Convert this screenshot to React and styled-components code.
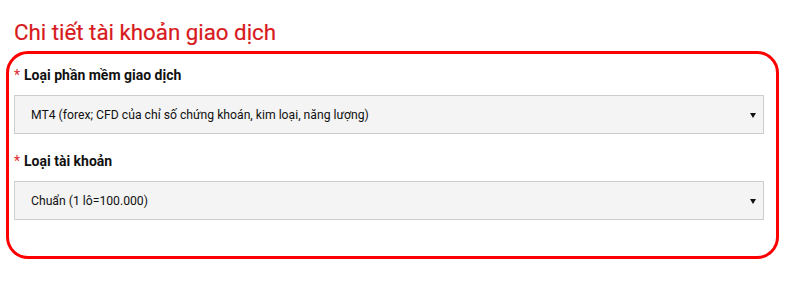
import React from 'react';
import styled, { createGlobalStyle } from 'styled-components';

const GlobalStyle = createGlobalStyle`
  body {
    margin: 0;
    background: #fff;
    font-family: Roboto, "Liberation Sans", Arial, sans-serif;
  }
`;

const Page = styled.div`
  width: 786px;
  height: 285px;
  padding: 0 6px;
  box-sizing: border-box;
`;

const Title = styled.h2`
  margin: 0;
  padding: 19px 0 0 8px;
  height: 51px;
  box-sizing: border-box;
  font-size: 22.3px;
  font-weight: 400;
  line-height: 26px;
  color: #d71920;
  -webkit-text-stroke: 0.2px #d71920;
`;

const Box = styled.div`
  width: 773px;
  height: 208px;
  box-sizing: border-box;
  border: 3px solid #ff0000;
  border-radius: 22px;
  padding: 11px 12px 0 5px;
  display: flex;
  flex-direction: column;
`;

const Label = styled.div`
  font-size: 14px;
  font-weight: 700;
  line-height: 20px;
  height: 20px;
  color: #111;
  margin-top: ${p => p.$first ? '0' : '17px'};
  margin-bottom: 10px;
`;

const Star = styled.span`
  color: #e0282e;
  font-weight: 400;
  margin-right: 4px;
`;

const Select = styled.div`
  height: 39px;
  box-sizing: border-box;
  border: 1px solid #cdcdcd;
  background: #f4f4f4;
  display: flex;
  align-items: center;
  justify-content: space-between;
  padding: 0 7px 0 16px;
  font-size: 12.2px;
  color: #111;
`;

const Arrow = styled.span`
  width: 0;
  height: 0;
  border-left: 3px solid transparent;
  border-right: 3px solid transparent;
  border-top: 5px solid #111;
  margin-top: 1px;
`;

const Field = ({ label, value, first }) => (
  <>
    <Label $first={first}><Star>*</Star>{label}</Label>
    <Select>
      <span>{value}</span>
      <Arrow />
    </Select>
  </>
);

export default function App() {
  return (
    <Page>
      <GlobalStyle />
      <Title>Chi tiết tài khoản giao dịch</Title>
      <Box>
        <Field first label="Loại phần mềm giao dịch" value="MT4 (forex; CFD của chỉ số chứng khoán, kim loại, năng lượng)" />
        <Field label="Loại tài khoản" value="Chuẩn (1 lô=100.000)" />
      </Box>
    </Page>
  );
}
